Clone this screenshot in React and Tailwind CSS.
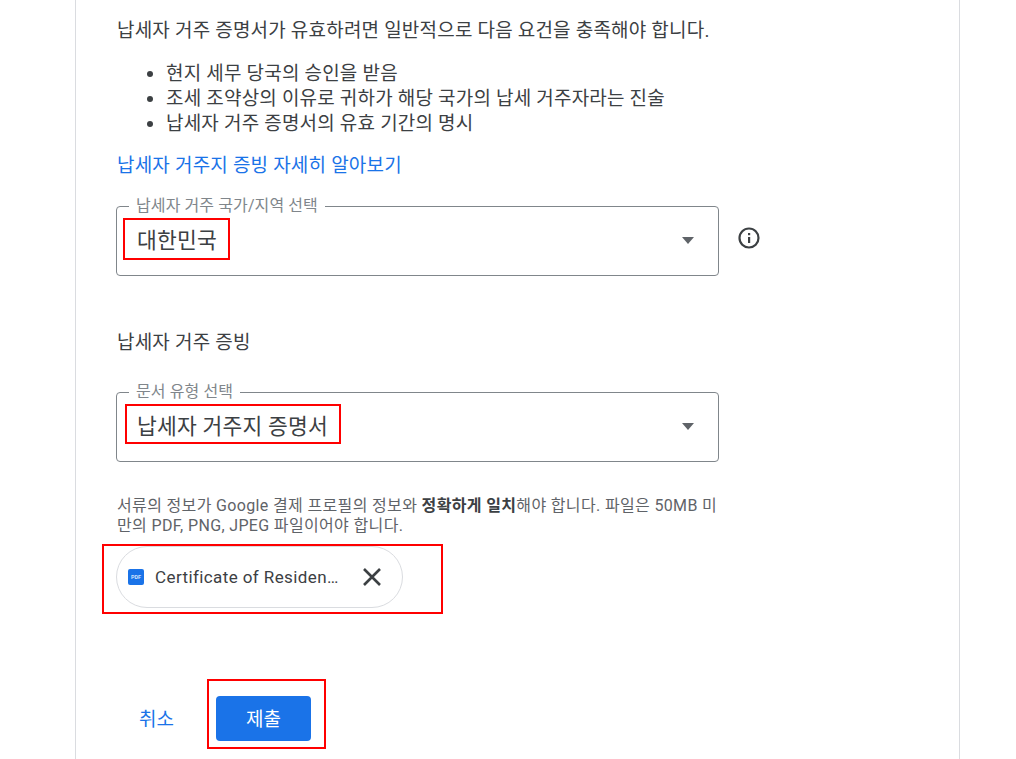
function Caret() {
  return (
    <svg width="14" height="7" viewBox="0 0 14 7" className="shrink-0">
      <path d="M1 0h12L7 7z" fill="#5f6368" />
    </svg>
  );
}

function SelectBox({ label, value, boxClass }) {
  return (
    <div className="relative h-[70px] w-[603px] rounded-[4px] border border-[#80868b]">
      <span className="absolute -top-[12px] left-[12px] bg-white px-[7px] text-[16px] leading-[22px] tracking-[0.1px] text-[#80868b]">{label}</span>
      <div className="flex h-[67px] items-center justify-between pl-[20px] pr-[23px]">
        <span className="text-[21.5px] leading-[28px] tracking-[0.2px] text-[#3c4043]">{value}</span>
        <Caret />
      </div>
      <div className={"absolute border-2 border-[#ff0000] " + boxClass} />
    </div>
  );
}

export default function App() {
  return (
    <div className="h-[759px] w-[1016px] overflow-hidden bg-white font-['Roboto','Noto_Sans_CJK_KR',sans-serif] text-[#3c4043]">
      <div className="mx-[75px] h-full w-[885px] border-x border-[#dadce0] pl-[40px]">
        <p className="pl-[1px] pt-[19px] text-[19px] leading-[24px] tracking-[0.2px]">납세자 거주 증명서가 유효하려면 일반적으로 다음 요건을 충족해야 합니다.</p>
        <ul className="mt-[18px] list-disc pl-[50px] text-[19px] leading-[25px] tracking-[0.2px]">
          <li>현지 세무 당국의 승인을 받음</li>
          <li>조세 조약상의 이유로 귀하가 해당 국가의 납세 거주자라는 진술</li>
          <li>납세자 거주 증명서의 유효 기간의 명시</li>
        </ul>
        <a className="mt-[18px] block pl-[1px] text-[19px] leading-[24px] tracking-[0.2px] text-[#1a73e8]">납세자 거주지 증빙 자세히 알아보기</a>
        <div className="mt-[28px] flex items-start">
          <SelectBox label="납세자 거주 국가/지역 선택" value="대한민국" boxClass="left-[6px] top-[11px] h-[42px] w-[107px]" />
          <svg width="24" height="24" viewBox="0 0 24 24" className="ml-[18px] mt-[20px]" fill="none">
            <circle cx="12" cy="12" r="9.5" stroke="#3c4043" strokeWidth="2.2" />
            <rect x="11" y="11" width="2.2" height="6" fill="#3c4043" />
            <rect x="11" y="7" width="2.2" height="2.2" fill="#3c4043" />
          </svg>
        </div>
        <p className="mt-[55px] pl-[1px] text-[19px] leading-[24px] tracking-[0.2px]">납세자 거주 증빙</p>
        <div className="mt-[37px]">
          <SelectBox label="문서 유형 선택" value="납세자 거주지 증명서" boxClass="left-[8px] top-[11px] h-[40px] w-[216px]" />
        </div>
        <p className="mt-[34px] w-[625px] pl-[1px] text-[16px] leading-[20px] tracking-[0.35px] text-[#5f6368]">
          서류의 정보가 Google 결제 프로필의 정보와 <b className="font-bold text-[#3c4043]">정확하게 일치</b>해야 합니다. 파일은 50MB 미<br />만의 PDF, PNG, JPEG 파일이어야 합니다.
        </p>
        <div className="relative mt-[10px] flex h-[62px] w-[287px] items-center rounded-full border border-[#dadce0] pl-[11px]">
          <svg width="16" height="16" viewBox="0 0 16 16" className="shrink-0">
            <rect width="16" height="16" rx="2" fill="#1a73e8" />
            <text x="8" y="10" textAnchor="middle" fontSize="5.5" fontWeight="700" fill="#cfe0fb" fontFamily="Roboto, sans-serif">PDF</text>
          </svg>
          <span className="ml-[11px] w-[186px] truncate text-[17px] leading-[24px] tracking-[0.4px] text-[#3c4043]">Certificate of Residence.pdf</span>
          <svg width="20" height="20" viewBox="0 0 20 20" className="ml-[21px] shrink-0" fill="none">
            <path d="M2 2l16 16M18 2L2 18" stroke="#3c4043" strokeWidth="2.6" />
          </svg>
          <div className="absolute -left-[15px] -top-[3px] h-[70px] w-[341px] border-2 border-[#ff0000]" />
        </div>
        <div className="mt-[88px] flex items-center">
          <button className="ml-[23px] pt-[2px] text-[19px] leading-[24px] text-[#1a73e8]">취소</button>
          <div className="relative ml-[42px]">
            <button className="h-[45px] w-[95px] rounded-[4px] bg-[#1a73e8] pt-[3px] text-[19px] text-white">제출</button>
            <div className="absolute -left-[9px] -top-[17px] h-[70px] w-[119px] border-2 border-[#ff0000]" />
          </div>
        </div>
      </div>
    </div>
  );
}
